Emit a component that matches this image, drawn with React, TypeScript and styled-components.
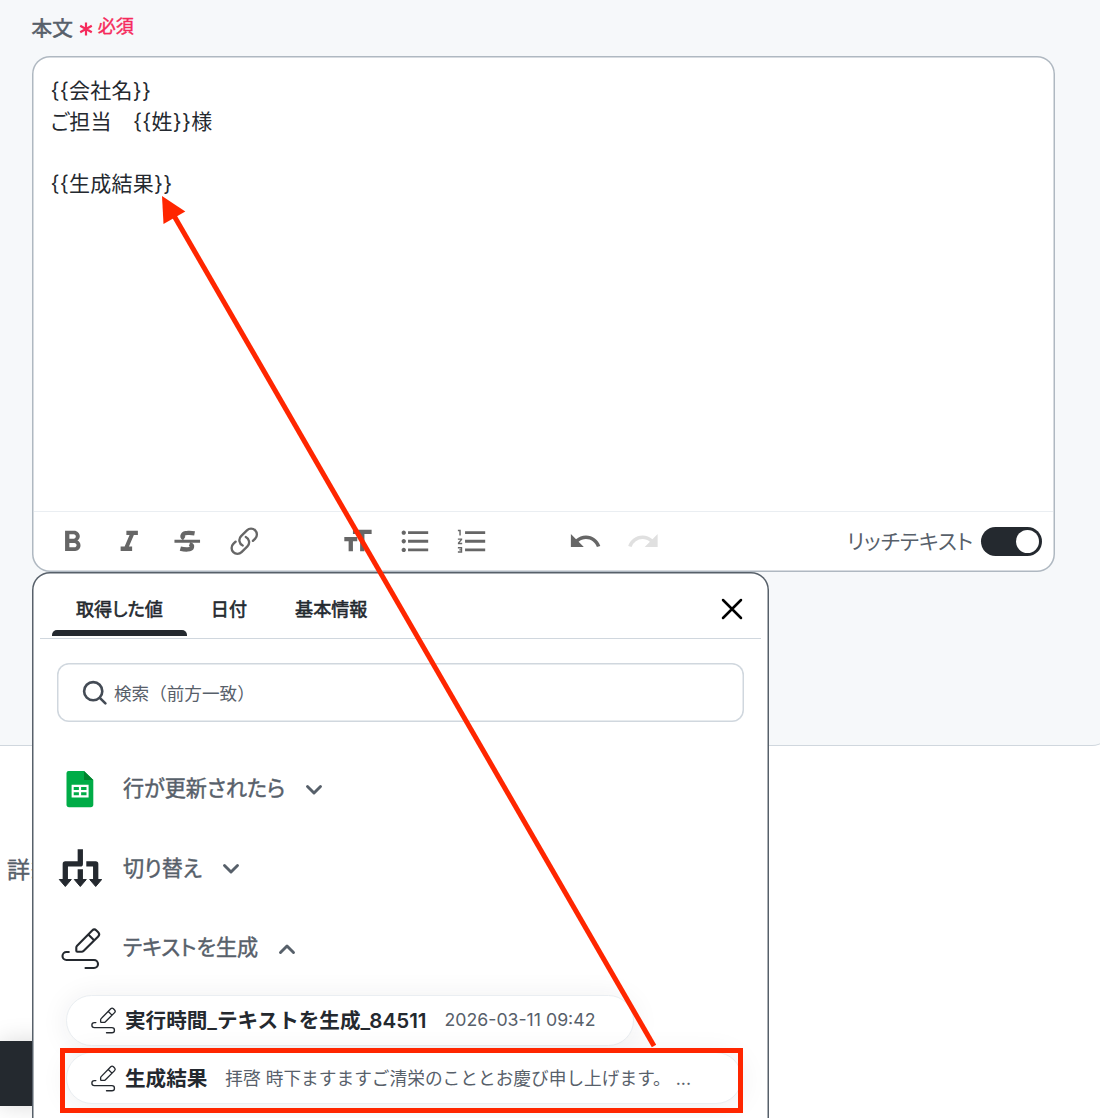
import React from "react";
import styled, { createGlobalStyle } from "styled-components";
import {
  MdFormatBold,
  MdFormatItalic,
  MdFormatListBulleted,
  MdFormatListNumbered,
  MdFormatSize,
  MdRedo,
  MdUndo,
} from "react-icons/md";

const App = () => {
  return (
    <Page>
      <GlobalStyle />
      <FormSection>
        <FieldLabel>
          本文
          <RequiredMark />
          <Required>必須</Required>
        </FieldLabel>
        <Editor>
          <EditorBody>
            <p>{"{{会社名}}"}</p>
            <p>ご担当　{"{{姓}}"}様</p>
            <p>&nbsp;</p>
            <p>{"{{生成結果}}"}</p>
          </EditorBody>
          <ToolBar>
            <ToolGroup>
              <MdFormatBold className="low" />
              <MdFormatItalic className="low" />
              <StrikeIcon />
              <LinkIcon />
            </ToolGroup>
            <ToolGroup>
              <MdFormatSize />
              <MdFormatListBulleted />
              <MdFormatListNumbered />
            </ToolGroup>
            <ToolGroup>
              <MdUndo />
              <MdRedo className="disabled" />
            </ToolGroup>
            <RichText>
              <span>リッチテキスト</span>
              <Toggle>
                <Knob />
              </Toggle>
            </RichText>
          </ToolBar>
        </Editor>
      </FormSection>

      <Footer>
        <DetailLabel>詳細</DetailLabel>
        <SaveButton />
      </Footer>

      <Popup>
        <TabBar>
          <Tab $active>取得した値</Tab>
          <Tab>日付</Tab>
          <Tab>基本情報</Tab>
          <CloseIcon />
        </TabBar>
        <SearchBox>
          <SearchIcon />
          検索（前方一致）
        </SearchBox>
        <GroupList>
          <Group>
            <SheetIcon />
            <span>行が更新されたら</span>
            <Chevron />
          </Group>
          <Group>
            <BranchIcon />
            <span>切り替え</span>
            <Chevron />
          </Group>
          <Group>
            <PencilIcon size={44} />
            <span>テキストを生成</span>
            <Chevron up />
          </Group>
        </GroupList>
        <ValueList>
          <ValueItem $width={568}>
            <PencilIcon size={28} />
            <strong>実行時間_テキストを生成_84511</strong>
            <span>2026-03-11 09:42</span>
          </ValueItem>
          <ValueItem $width={676}>
            <PencilIcon size={28} />
            <strong>生成結果</strong>
            <span>拝啓 時下ますますご清栄のこととお慶び申し上げます。 ...</span>
          </ValueItem>
        </ValueList>
      </Popup>

      <Highlight />
      <Arrow viewBox="0 0 1100 1118">
        <path d="M654 1046L173 214" stroke="#ff2600" strokeWidth="5" />
        <path d="M162 196l1.5 28 21.8-12.500z" fill="#ff2600" />
      </Arrow>
    </Page>
  );
};

export default App;

const RequiredMark = () => (
  <svg className="mark" width="14" height="16" viewBox="0 0 14 16">
    <path
      d="M7 1.5v13M1.2 4.7l11.6 6.6M12.8 4.7L1.2 11.3"
      stroke="#f52a5b"
      strokeWidth="2.2"
    />
  </svg>
);

const StrikeIcon = () => (
  <svg viewBox="0 0 24 24" fill="none" stroke="#666">
    <path d="M3.1 12h17.8" strokeWidth="2.1" />
    <path
      d="M17.1 6.5C15 6.1 13.5 6.1 12.2 6.2C8.8 6.3 7.6 8.6 9.9 10.1M13.6 13.9C16.3 14.8 15.8 17.6 12.3 17.7C10.5 17.8 9 17.6 7.2 17.1"
      strokeWidth="3"
    />
  </svg>
);

const LinkIcon = () => (
  <svg viewBox="-1.3 -1.3 26.6 26.6" fill="none">
    <path
      d="M13.19 8.688a4.5 4.5 0 0 1 1.242 7.244l-4.5 4.5a4.5 4.5 0 0 1-6.364-6.364l1.757-1.757m13.35-.622 1.757-1.757a4.5 4.5 0 0 0-6.364-6.364l-4.5 4.5a4.5 4.5 0 0 0 1.242 7.244"
      stroke="#666"
      strokeWidth="1.8"
      strokeLinecap="round"
      strokeLinejoin="round"
    />
  </svg>
);

const CloseIcon = () => (
  <svg className="close" width="22" height="22" viewBox="0 0 22 22">
    <path
      d="M2 2l18 18M20 2L2 20"
      stroke="#000"
      strokeWidth="2.5"
      strokeLinecap="round"
    />
  </svg>
);

const SearchIcon = () => (
  <svg width="26" height="26" viewBox="0 0 26 26" fill="none">
    <circle cx="11.2" cy="11.2" r="9.1" stroke="#444b55" strokeWidth="2.6" />
    <path
      d="M17.8 17.8l5.6 5.6"
      stroke="#444b55"
      strokeWidth="2.6"
      strokeLinecap="round"
    />
  </svg>
);

const SheetIcon = () => (
  <svg width="44" height="44" viewBox="0 0 44 44">
    <path
      d="M10.5 4H26l9.3 9v24.6a2.6 2.6 0 0 1-2.6 2.6H11.1a2.6 2.6 0 0 1-2.6-2.6V6.1A2.2 2.2 0 0 1 10.5 4z"
      fill="#00ac47"
    />
    <path d="M26 4l9.3 9H26z" fill="#00832d" />
    <path
      fillRule="evenodd"
      d="M13.6 17.7h17v12.7h-17zM15.7 20v3.1h5.2V20zM23.1 20v3.1h5.4V20zM15.7 25.2v3h5.2v-3zM23.1 25.2v3h5.4v-3z"
      fill="#fff"
    />
  </svg>
);

const BranchIcon = () => (
  <svg width="44" height="44" viewBox="0 0 44 44">
    <path
      d="M22.3 3.2V17.9H7.3V34M28.3 17.9H37.7V34M22.3 23.3V34"
      fill="none"
      stroke="#24292f"
      strokeWidth="5.3"
      strokeLinejoin="round"
    />
    <path
      d="M1.3 33.5h12L7.3 40.5zM16.3 33.5h12L22.3 40.5zM31.7 33.5h12L37.7 40.5z"
      fill="#24292f"
      stroke="#24292f"
      strokeWidth="1"
      strokeLinejoin="round"
    />
  </svg>
);

const PencilIcon = ({ size }: { size: number }) => (
  <svg
    width={size}
    height={size}
    viewBox="0 0 44 44"
    fill="none"
    stroke="#24292f"
    strokeWidth="2.1"
    strokeLinecap="round"
    strokeLinejoin="round"
  >
    <path d="M18.3 24.8v-3.2c0-.8.3-1.3.8-1.8L34.2 4.4a3 3 0 0 1 4.2 0l1.8 1.8a3 3 0 0 1 0 4.2L25.5 25c-.5.5-1 .8-1.8.8h-4.4c-.6 0-1-.4-1-1zM30.3 8.5l5.8 5.8" />
    <path d="M10.8 26H8.5a4 4 0 0 0 0 8H36a4 4 0 0 1 0 8h-8.500" />
  </svg>
);

const Chevron = ({ up }: { up?: boolean }) => (
  <svg className="chevron" width="18" height="12" viewBox="0 0 18 12">
    <path
      d={up ? "M2.5 9.5L9 3l6.5 6.5" : "M2.5 2.5L9 9l6.5-6.5"}
      fill="none"
      stroke="#57606a"
      strokeWidth="2.9"
      strokeLinecap="round"
      strokeLinejoin="round"
    />
  </svg>
);

const GlobalStyle = createGlobalStyle`
  * {
    box-sizing: border-box;
  }
  body {
    margin: 0;
    font-family: Inter, "Noto Sans CJK JP", sans-serif;
    color: #24292f;
  }
  p {
    margin: 0;
  }
`;

const Page = styled.div`
  position: relative;
  width: 1100px;
  height: 1118px;
  overflow: hidden;
  background-color: white;
`;

const FormSection = styled.div`
  width: 1110px;
  height: 746px;
  padding: 13px 55px 0 31.6px;
  background-color: #f6f8fa;
  border-bottom: 1px solid #d0d7de;
  border-bottom-right-radius: 18px;
`;

const FieldLabel = styled.div`
  display: flex;
  align-items: center;
  height: 28px;
  font-size: 20.6px;
  -webkit-text-stroke: 0.6px #57606a;
  color: #57606a;
  .mark {
    margin: 3px 5px 0 6px;
  }
`;

const Required = styled.span`
  font-size: 18px;
  -webkit-text-stroke: 0.4px #f52a5b;
  color: #f52a5b;
  margin-top: -4px;
`;

const Editor = styled.div`
  height: 516px;
  margin-top: 14.6px;
  padding: 1px;
  display: flex;
  flex-direction: column;
  background-color: white;
  box-shadow: inset 0 0 0 1.5px #afb8c1;
  border-radius: 18px;
`;

const EditorBody = styled.div`
  flex: 1;
  padding: 18px;
  font-size: 21px;
  line-height: 31px;
  letter-spacing: 0.25px;
  font-feature-settings: "palt";
`;

const ToolBar = styled.div`
  height: 60px;
  margin: 0 1px;
  padding: 0 11px 0 21px;
  display: flex;
  align-items: center;
  border-top: 1px solid #eaeef2;
`;

const ToolGroup = styled.div`
  display: flex;
  align-items: center;
  gap: 23px;
  margin-right: 78.5px;
  color: #666;
  svg {
    width: 34.5px;
    height: 34.5px;
  }
  .low {
    margin-top: 2px;
  }
  .disabled {
    color: #e0e0e0;
  }
`;

const RichText = styled.div`
  display: flex;
  align-items: center;
  gap: 8px;
  margin-left: auto;
  font-size: 21px;
  white-space: nowrap;
  font-feature-settings: "palt";
  color: #57606a;
  span {
    margin-top: -3px;
  }
`;

const Toggle = styled.div`
  width: 61px;
  height: 29px;
  padding: 3px;
  display: flex;
  justify-content: flex-end;
  border-radius: 15px;
  background-color: #24292f;
`;

const Knob = styled.div`
  width: 23px;
  height: 23px;
  border-radius: 50%;
  background-color: white;
`;

const Footer = styled.div`
  height: 372px;
  display: flex;
  flex-direction: column;
  align-items: flex-start;
`;

const DetailLabel = styled.div`
  margin: 107px 0 0 7px;
  font-size: 23px;
  line-height: 34px;
  letter-spacing: 1.2px;
  -webkit-text-stroke: 0.4px #57606a;
  color: #57606a;
`;

const SaveButton = styled.div`
  width: 120px;
  height: 65px;
  margin-top: 154px;
  background-color: #24292f;
  box-shadow: 0 0 24px rgba(0, 0, 0, 0.15);
`;

const Popup = styled.div`
  position: absolute;
  top: 572px;
  left: 31.6px;
  width: 737.4px;
  height: 600px;
  padding: 1px;
  background-color: white;
  box-shadow: inset 0 0 0 1.5px #57606a;
  border-radius: 18px;
`;

const TabBar = styled.div`
  height: 66px;
  margin: 0 7px;
  padding: 0 18px 0 12.4px;
  display: flex;
  align-items: flex-start;
  font-feature-settings: "palt";
  border-bottom: 1px solid #d0d7de;
  .close {
    margin-left: auto;
    margin-top: 24.5px;
  }
`;

const Tab = styled.div<{ $active?: boolean }>`
  height: 63px;
  padding: 21px 24px 0;
  font-size: 18.1px;
  line-height: 30px;
  -webkit-text-stroke: 0.6px #24292f;
  position: relative;
  &::after {
    content: "";
    display: ${(props) => (props.$active ? "block" : "none")};
    position: absolute;
    left: 0;
    right: 0;
    bottom: 0;
    height: 6px;
    border-radius: 5px 5px 0 0;
    background-color: #24292f;
  }
`;

const SearchBox = styled.div`
  width: 687px;
  height: 59px;
  margin: 24px 0 0 24px;
  padding-left: 25.4px;
  display: flex;
  align-items: center;
  gap: 6px;
  box-shadow: inset 0 0 0 1.5px #d0d7de;
  border-radius: 12px;
  font-size: 17.6px;
  color: #57606a;
`;

const GroupList = styled.div`
  padding: 27px 0 0 25.4px;
`;

const Group = styled.div`
  height: 79.5px;
  display: flex;
  align-items: center;
  font-size: 21.1px;
  font-feature-settings: "palt";
  -webkit-text-stroke: 0.45px #57606a;
  color: #57606a;
  span {
    margin: -3px 0 0 21px;
  }
  .chevron {
    margin-left: 20px;
    margin-top: 2px;
  }
`;

const ValueList = styled.div`
  padding: 7px 0 0 33.4px;
  display: flex;
  flex-direction: column;
  gap: 6px;
`;

const ValueItem = styled.div<{ $width: number }>`
  width: ${(props) => props.$width}px;
  height: 51.5px;
  padding: 0 0 2px 22px;
  display: flex;
  align-items: center;
  white-space: nowrap;
  background-color: white;
  border: 1px solid #eaeef2;
  border-radius: 26px;
  box-shadow: 0 2px 28px rgba(36, 41, 47, 0.08);
  svg {
    margin-top: 2px;
  }
  strong {
    margin-left: 8px;
    font-size: 20.6px;
    font-weight: 600;
  }
  span {
    margin-left: 18px;
    font-size: 17.7px;
    color: #57606a;
  }
`;

const Highlight = styled.div`
  position: absolute;
  left: 60px;
  top: 1048px;
  width: 683px;
  height: 65px;
  border: 5px solid #ff2600;
`;

const Arrow = styled.svg`
  position: absolute;
  left: 0;
  top: 0;
  width: 1100px;
  height: 1118px;
`;
